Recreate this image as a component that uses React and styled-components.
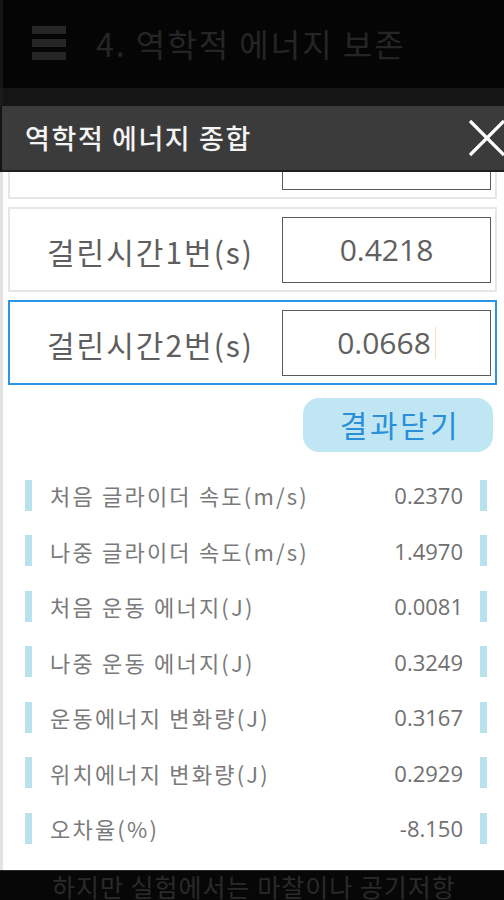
import { useLayoutEffect, useRef } from "react";
import styled, { createGlobalStyle } from "styled-components";

const GlobalStyle = createGlobalStyle`
  html, body {
    margin: 0;
    padding: 0;
    background: #000;
  }
  body {
    font-family: "Open Sans", "Noto Sans CJK KR", sans-serif;
  }
  * {
    box-sizing: border-box;
  }
`;

const Screen = styled.div`
  width: 504px;
  height: 900px;
  overflow: hidden;
  display: flex;
  flex-direction: column;
  background: #000;
`;

const AppBar = styled.div`
  height: 88px;
  flex: none;
  display: flex;
  align-items: center;
  gap: 30px;
  padding-left: 29px;
  background: #050505;
  border-left: 3px solid #161616;
`;

const Burger = styled.div`
  width: 34px;
  display: flex;
  flex-direction: column;
  gap: 5px;
  margin-top: -3px;

  span {
    display: block;
    height: 8px;
    background: #262626;
  }
`;

const AppTitle = styled.div`
  font-family: "Noto Sans CJK KR", sans-serif;
  font-size: 32px;
  letter-spacing: 2px;
  color: #252525;
  margin-top: -2px;
  white-space: nowrap;
`;

const Gap = styled.div`
  height: 18px;
  flex: none;
  background: #151515;
  border-left: 3px solid #1c1c1c;
`;

const ModalHeader = styled.div`
  position: relative;
  z-index: 1;
  height: 66px;
  flex: none;
  display: flex;
  align-items: center;
  justify-content: space-between;
  padding-left: 23px;
  background: #3b3b3b;
  border-left: 2px solid #141414;
  border-bottom: 2px solid #1e1e1e;
`;

const ModalTitle = styled.div`
  font-family: "Noto Sans CJK KR", sans-serif;
  font-size: 27px;
  font-weight: 500;
  letter-spacing: 1.6px;
  color: #f4f4f4;
  margin-top: -2px;
`;

const CloseIcon = styled.svg`
  width: 38px;
  height: 38px;
  margin-right: -2px;
  flex: none;
`;

const ModalBody = styled.div`
  height: 698px;
  flex: none;
  overflow: hidden;
  background: #fff;
  border-left: 3px solid #e2e2e2;
  padding: 0 7px 0 5px;
  display: flex;
  flex-direction: column;
`;

const Field = styled.div`
  height: 85px;
  flex: none;
  display: flex;
  align-items: center;
  justify-content: space-between;
  padding: 0 4px 0 37px;
  margin-bottom: 8px;
  border: 2px solid ${(p) => (p.$focused ? "#2a95e6" : "#e6e6e6")};
`;

const FieldLabel = styled.div`
  font-family: "Noto Sans CJK KR", sans-serif;
  font-size: 30px;
  letter-spacing: 2px;
  color: #5e5e5e;
  margin-top: 2px;
  white-space: nowrap;
`;

const FieldValue = styled.div`
  width: 209px;
  height: 66px;
  display: flex;
  align-items: center;
  justify-content: center;
  border: 1px solid #5a5a5a;
  font-family: "Open Sans", "Noto Sans CJK KR", sans-serif;
  font-size: 30px;
  color: #606060;
`;

const Caret = styled.span`
  display: inline-block;
  width: 1px;
  height: 32px;
  margin-left: 4px;
  background: #f3dfc4;
`;

const ButtonRow = styled.div`
  flex: none;
  display: flex;
  justify-content: flex-end;
  padding-right: 4px;
  margin-top: 5px;
`;

const CloseButton = styled.button`
  width: 190px;
  height: 54px;
  border: none;
  border-radius: 16px;
  background: #c0e6f4;
  color: #2a8fd8;
  font-family: "Noto Sans CJK KR", sans-serif;
  font-size: 30px;
  letter-spacing: 2.5px;
  padding: 0 0 2px 4px;
  cursor: pointer;
`;

const ResultList = styled.div`
  flex: none;
  display: flex;
  flex-direction: column;
  gap: 24.5px;
  padding: 27px 10px 27px 17px;
`;

const ResultRow = styled.div`
  height: 31px;
  display: grid;
  grid-template-columns: 7px 1fr auto 7px;
  align-items: center;
  column-gap: 18px;
`;

const Bar = styled.div`
  width: 7px;
  height: 31px;
  background: #b6e1ed;
`;

const ResultLabel = styled.div`
  font-family: "Noto Sans CJK KR", sans-serif;
  font-size: 22px;
  letter-spacing: 2.2px;
  color: #7a7a7a;
  white-space: nowrap;
`;

const ResultValue = styled.div`
  font-family: "Open Sans", sans-serif;
  font-size: 22px;
  color: #707070;
  margin-right: -1px;
`;

const Footer = styled.div`
  flex: 1;
  background: #070707;
  border-top: 1px solid #2a2a2a;
  padding: 0 0 0 52px;
  font-family: "Noto Sans CJK KR", sans-serif;
  font-size: 25px;
  letter-spacing: 1px;
  line-height: 30px;
  color: #2a2a2a;
  white-space: nowrap;
`;

// the first field is scrolled almost out of view, only its lower edge shows
const fields = [
  { label: "", value: "" },
  { label: "걸린시간1번(s)", value: "0.4218" },
  { label: "걸린시간2번(s)", value: "0.0668", focused: true },
];

const results = [
  ["처음 글라이더 속도(m/s)", "0.2370"],
  ["나중 글라이더 속도(m/s)", "1.4970"],
  ["처음 운동 에너지(J)", "0.0081"],
  ["나중 운동 에너지(J)", "0.3249"],
  ["운동에너지 변화량(J)", "0.3167"],
  ["위치에너지 변화량(J)", "0.2929"],
  ["오차율(%)", "-8.150"],
];

function App() {
  const bodyRef = useRef(null);

  useLayoutEffect(() => {
    if (bodyRef.current) bodyRef.current.scrollTop = 58;
  }, []);

  return (
    <Screen>
      <GlobalStyle />
      <AppBar>
        <Burger>
          <span />
          <span />
          <span />
        </Burger>
        <AppTitle>4. 역학적 에너지 보존</AppTitle>
      </AppBar>
      <Gap />
      <ModalHeader>
        <ModalTitle>역학적 에너지 종합</ModalTitle>
        <CloseIcon viewBox="0 0 38 38">
          <path
            d="M2 2 L36 36 M36 2 L2 36"
            stroke="#fff"
            strokeWidth="3.2"
            fill="none"
          />
        </CloseIcon>
      </ModalHeader>
      <ModalBody ref={bodyRef}>
        {fields.map((f, i) => (
          <Field key={i} $focused={f.focused}>
            <FieldLabel>{f.label}</FieldLabel>
            <FieldValue>
              {f.value}
              {f.focused && <Caret />}
            </FieldValue>
          </Field>
        ))}
        <ButtonRow>
          <CloseButton>결과닫기</CloseButton>
        </ButtonRow>
        <ResultList>
          {results.map(([label, value]) => (
            <ResultRow key={label}>
              <Bar />
              <ResultLabel>{label}</ResultLabel>
              <ResultValue>{value}</ResultValue>
              <Bar />
            </ResultRow>
          ))}
        </ResultList>
      </ModalBody>
      <Footer>하지만 실험에서는 마찰이나 공기저항</Footer>
    </Screen>
  );
}

export default App;
